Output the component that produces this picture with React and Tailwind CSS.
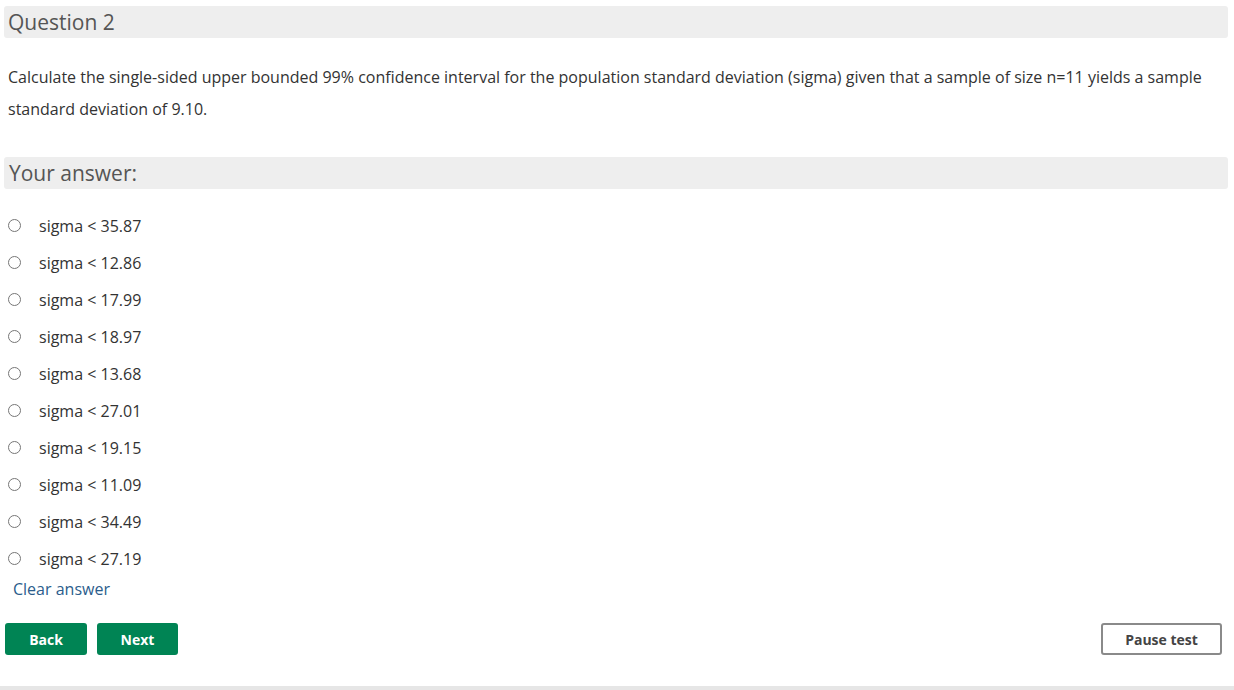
import { useState } from 'react';

const options = ['35.87', '12.86', '17.99', '18.97', '13.68', '27.01', '19.15', '11.09', '34.49', '27.19'];

function App() {
  const [picked, setPicked] = useState(null);

  return (
    <div className="min-h-[690px] bg-white flex flex-col text-[#333]" style={{ fontFamily: '"Open Sans", sans-serif' }}>
      <div className="px-1 pt-[6px] flex-1">
        <div className="bg-[#eeeeee] rounded-[3px] h-8 mr-[2px] flex items-center px-1">
          <h2 className="text-[21px] text-[#555] leading-none">Question 2</h2>
        </div>

        <p className="px-1 mt-[23px] text-[16px] leading-8 text-[#333]">
          Calculate the single-sided upper bounded 99% confidence interval for the population standard deviation (sigma) given that a sample of size n=11 yields a sample standard deviation of 9.10.
        </p>

        <div className="bg-[#eeeeee] rounded-[3px] h-8 mr-[2px] flex items-center px-[5px] mt-[32px]">
          <h3 className="text-[21px] text-[#555] leading-none">Your answer:</h3>
        </div>

        <div className="mt-[18px] flex flex-col">
          {options.map((v, i) => (
            <label key={i} className="h-[37px] flex items-center cursor-pointer">
              <input
                type="radio"
                name="ans"
                checked={picked === i}
                onChange={() => setPicked(i)}
                className="w-[13px] h-[13px] ml-[4px] mr-[18px] accent-[#666]"
              />
              <span className="text-[16px] text-[#333]">sigma &lt; {v}</span>
            </label>
          ))}
        </div>

        <button onClick={() => setPicked(null)} className="ml-[9px] mt-[-3px] text-[16px] text-[#2b5d8c]">
          Clear answer
        </button>

        <div className="mt-[22px] flex items-center pr-[8px]">
          <button className="w-[82px] h-8 ml-[1px] rounded-[3px] bg-[#008454] text-white font-bold text-[14px]">Back</button>
          <button className="w-[81px] h-8 ml-[10px] rounded-[3px] bg-[#008454] text-white font-bold text-[14px]">Next</button>
          <button className="ml-auto w-[121px] h-8 rounded-[3px] border-2 border-[#8a8a8a] bg-white text-[#444] font-bold text-[14px]">Pause test</button>
        </div>
      </div>
      <div className="h-[4px] bg-[#e6e6e6]" />
    </div>
  );
}

export default App;
